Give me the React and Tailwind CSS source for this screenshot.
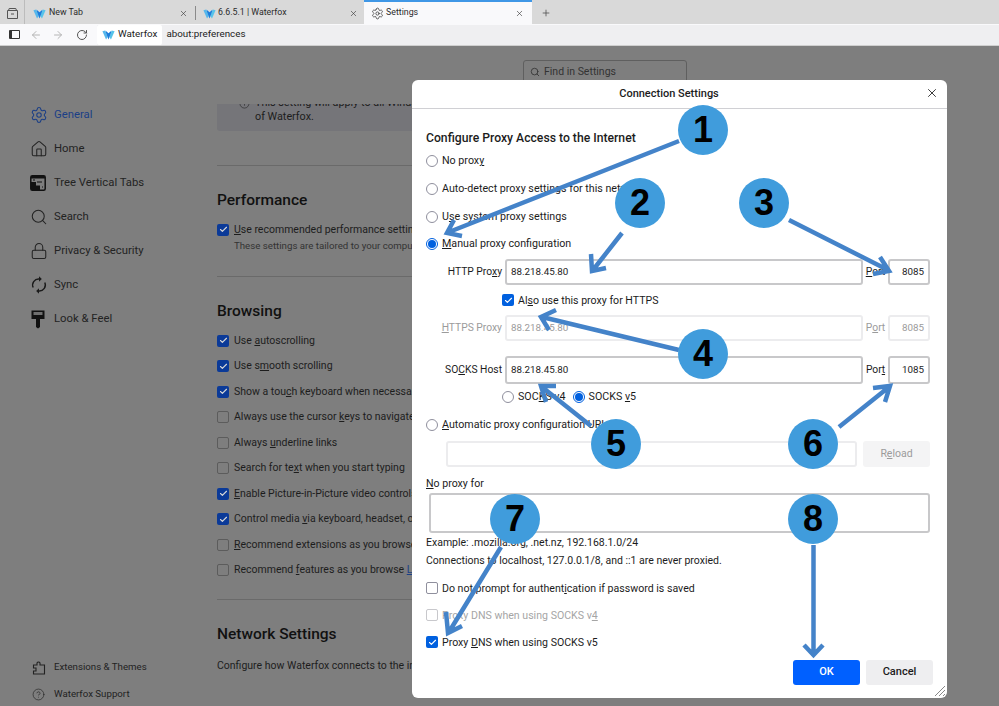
import React from "react";
import { Settings, House, Search, Lock, X, Plus, ArrowLeft, ArrowRight, RotateCw, CircleHelp, Check, Info } from "lucide-react";

const Wf = ({ s = 14 }) => (
  <svg width={s} height={s} viewBox="0 0 16 16" className="shrink-0">
    <path d="M0.5 4 L4 3 L7 11 L5 14 Z" fill="#57b8ec" />
    <path d="M15.5 4 L12 3 L9 11 L11 14 Z" fill="#57c4ea" />
    <path d="M4.5 3.5 L8 6.5 L11.5 3.5 L11 6 L8 14 L5 6 Z" fill="#1d7ddb" />
  </svg>
);

const Tab = ({ icon, label, active, w, sep }) => (
  <div className={`relative flex h-[24px] shrink-0 items-center text-[8.8px] ${w} ${active ? "border-t-2 border-[#3f97e6] bg-[#f9f9fb]" : "pt-[2px]"}`}>
    {icon}
    <span className="flex-1 text-[#2b2b2b]">{label}</span>
    <X size={9} strokeWidth={1.6} className="text-[#333]" />
    {sep && <span className="absolute right-0 top-[6px] h-[14px] w-px bg-[#8a8a8a]" />}
  </div>
);

const Nav = ({ icon, label, active }) => (
  <div className={`flex h-[34px] items-center text-[11.3px] ${active ? "text-[#1b3f86]" : "text-[#232323]"}`}>
    <span className="flex w-[24px] justify-start">{icon}</span>
    {label}
  </div>
);

const PageCheck = ({ on, children }) => (
  <div className="flex h-[25.5px] items-center whitespace-nowrap text-[10.5px] text-[#1d1d1d]">
    <span className={`mr-[5px] flex h-[12px] w-[12px] shrink-0 items-center justify-center rounded-[2px] ${on ? "bg-[#0b3a98]" : "border border-[#5c5c5c]"}`}>
      {on && <Check size={9} strokeWidth={3} className="text-[#d9d9d9]" />}
    </span>
    <span>{children}</span>
  </div>
);

const Hr = ({ cls }) => <div className={`h-px w-[400px] bg-[#6a6a6a] ${cls}`} />;

const Radio = ({ on, children }) => (
  <div className="flex items-center whitespace-nowrap text-[10.7px] text-[#1c1c1c]">
    <span className={`mr-[4px] flex h-[12px] w-[12px] shrink-0 items-center justify-center rounded-full border ${on ? "border-[#0060df]" : "border-[#8f8f9d]"} bg-white`}>
      {on && <span className="h-[8px] w-[8px] rounded-full bg-[#0060df]" />}
    </span>
    <span className="pt-px">{children}</span>
  </div>
);

const DlgCheck = ({ on, dim, children }) => (
  <div className="flex items-center whitespace-nowrap text-[10.6px] text-[#1c1c1c]">
    <span className={`mr-[4px] flex h-[12px] w-[12px] shrink-0 items-center justify-center rounded-[2px] ${on ? "bg-[#0060df]" : dim ? "border border-[#c8c8cc]" : "border border-[#8f8f9d]"}`}>
      {on && <Check size={9} strokeWidth={3} className="text-white" />}
    </span>
    <span className={`pt-px ${dim ? "text-[#a5a5a5]" : ""}`}>{children}</span>
  </div>
);

const ProxyRow = ({ label, value, port, dim, cls, portLabel }) => (
  <div className={`flex items-center text-[10.3px] ${dim ? "text-[#9b9b9b]" : "text-[#1c1c1c]"} ${cls}`}>
    <span className="w-[79px] shrink-0 whitespace-nowrap pr-[3px] text-right">{label}</span>
    <span className={`flex h-full w-[358px] items-center rounded-[3px] border-2 px-[4px] text-[9.8px] ${dim ? "border-[#ececee]" : "border-[#c8c8ca]"}`}>{value}</span>
    <span className="flex w-[25px] justify-center">{portLabel}</span>
    <span className={`flex h-full w-[42px] items-center justify-end rounded-[3px] border-2 px-[4px] text-[9.8px] ${dim ? "border-[#ececee]" : "border-[#c8c8ca]"}`}>{port}</span>
  </div>
);

const Badges = [
  [1, 703, 130], [2, 640, 203], [3, 764, 203], [4, 703, 354],
  [5, 616, 444], [6, 813, 444], [7, 515, 519], [8, 813, 519],
];

const arrows = [
  "M679 141 L449 232 M454 220 L447 233 L462 236",
  "M622 233 L593 270 M591 254 L592 271 L606 268",
  "M789 220 L888 270 M880 257 L889 271 L873 274",
  "M679 350 L542 317 M556 310 L541 317 L549 330",
  "M591 426 L542 387 M556 386 L541 386 L546 402",
  "M839 427 L889 387 M873 388 L890 386 L885 402",
  "M501 547 L449 632 M446 612 L448 633 L462 626",
  "M813.5 545 L813.5 654 M804 645 L813.5 655 L823 645",
];

export default function App() {
  const font = { fontFamily: 'Roboto,"Open Sans",sans-serif' };
  return (
    <div style={font} className="relative h-[706px] w-[999px] overflow-hidden bg-[#7e7e7e]">
      {/* tab strip */}
      <div className="flex h-[24px] items-center bg-[#d9d9d9]">
        <div className="flex h-full w-[25px] shrink-0 items-center justify-center border-r border-[#bcbcbc] pt-[2px]">
          <svg width="13" height="13" viewBox="0 0 13 13" fill="none" stroke="#555" strokeWidth="1"><path d="M2.5 3.5 L3.2 1.5 H9.8 L10.5 3.5 M1.5 3.5 H11.5 V11.5 H1.5 Z M5 7 H8" /></svg>
        </div>
        <Tab w="w-[171px] pl-[8px] pr-[8px]" icon={<Wf s={13} />} label={<span className="ml-[3px]">New Tab</span>} sep />
        <Tab w="w-[168px] pl-[7px] pr-[6px]" icon={<Wf s={13} />} label={<span className="ml-[2px]">6.6.5.1 | Waterfox</span>} />
        <Tab w="w-[168px] pl-[7px] pr-[8px]" active icon={<Settings size={13} strokeWidth={1.4} className="mr-[2px] text-[#333]" />} label="Settings" />
        <Plus size={10} className="ml-[9px] mt-[2px] text-[#555]" />
      </div>
      {/* address bar */}
      <div className="flex h-[22px] items-center border-b border-[#cfcfcf] bg-[#f9f9fb] pl-[9px]">
        <span className="h-[9px] w-[11px] rounded-[1px] border-[1.5px] border-l-[3px] border-[#333]" />
        <ArrowLeft size={12} className="ml-[10px] text-[#b5b5b5]" />
        <ArrowRight size={12} className="ml-[10px] text-[#b5b5b5]" />
        <RotateCw size={12} className="ml-[12px] text-[#555]" />
        <div className="ml-[9px] flex h-[20px] flex-1 items-center bg-[#efeff1] text-[9.8px] text-[#222]">
          <span className="flex h-full items-center gap-[3px] rounded-[2px] bg-white pl-[5px] pr-[5px]">
            <Wf s={13} />Waterfox
          </span>
          <span className="ml-[4px]">about:preferences</span>
        </div>
      </div>
      {/* page */}
      <div className="flex h-[660px]">
        <aside className="flex w-[217px] shrink-0 flex-col justify-between pl-[30px]">
          <div className="pt-[52px]">
            <Nav active label="General" icon={<Settings size={18} strokeWidth={1.4} />} />
            <Nav label="Home" icon={<House size={18} strokeWidth={1.4} />} />
            <Nav label="Tree Vertical Tabs" icon={
              <svg width="16" height="16" viewBox="0 0 16 16"><rect x="0.8" y="0.8" width="14.4" height="14.4" rx="1.5" fill="none" stroke="#111" strokeWidth="1.5" /><path d="M1 1 H15 V3.5 H1 Z M1 7 H6 V10.5 H10 V15 H1 Z" fill="#111" /><path d="M3 5 H5 M7 7 H12 M12 12 H13" stroke="#111" strokeWidth="1" /></svg>
            } />
            <Nav label="Search" icon={<Search size={18} strokeWidth={1.4} />} />
            <Nav label="Privacy & Security" icon={<Lock size={18} strokeWidth={1.4} />} />
            <Nav label="Sync" icon={
              <svg width="18" height="18" viewBox="0 0 18 18" fill="none" stroke="#1a1a1a" strokeWidth="1.4"><path d="M3.2 11.5 A6 6 0 0 1 9 3 H10.5 M14.8 6.5 A6 6 0 0 1 9 15 H7.5" /><path d="M9 0.8 L11.3 3 L9 5.2 M9 12.8 L6.7 15 L9 17.2" fill="#1a1a1a" strokeWidth="1" /></svg>
            } />
            <Nav label="Look & Feel" icon={
              <svg width="16" height="20" viewBox="0 0 16 20" fill="none"><path d="M1.5 1.5 H14.5 V10 H1.5 Z" fill="#111" /><path d="M3.5 3 H12.5 V6 H3.5 Z" fill="#6f6f6f" /><path d="M6 10 H10 V18 L8 19.5 L6 18 Z" fill="#111" /></svg>
            } />
          </div>
          <div className="text-[9.7px] text-[#222]">
            <div className="flex h-[27px] items-center pt-[4px]">
              <svg width="14" height="15" viewBox="0 0 14 15" fill="none" stroke="#222" strokeWidth="1.1" className="ml-[2px] mr-[8px]"><path d="M1.5 5 H5 V3 A1.6 1.6 0 0 1 8 3 V5 H12.5 V14 H1.5 V11 H4 V8 H1.5 Z" /></svg>
              Extensions &amp; Themes
            </div>
            <div className="flex h-[27px] items-center pt-[4px]"><CircleHelp size={13} strokeWidth={1.2} className="ml-[2px] mr-[9px]" />Waterfox Support</div>
          </div>
        </aside>
        <main className="flex min-w-0 flex-1 flex-col">
          <div className="h-[58px] shrink-0 pl-[306px] pt-[14px]">
            <div className="flex h-[24px] w-[164px] items-center gap-[4px] rounded-[3px] border border-[#5f5f5f] pl-[6px] text-[10.5px] text-[#333]">
              <Search size={10} />Find in Settings
            </div>
          </div>
          <div className="min-h-0 flex-1 overflow-hidden">
            <div className="flex h-[27px] w-[400px] flex-col justify-end overflow-hidden rounded-b-[3px] bg-[#757579] pb-[7px] pl-[38px] text-[10.8px] leading-[14px] text-[#1d1d1d]">
              <div className="relative shrink-0 whitespace-nowrap"><Info size={11} strokeWidth={1.2} className="absolute -left-[16px] top-[2px]" />This setting will apply to all Windows</div>
              <div className="shrink-0">of Waterfox.</div>
            </div>
            <Hr cls="mt-[34px]" />
            <h2 className="mt-[24px] text-[15.5px] font-medium leading-[20px] text-[#111]">Performance</h2>
            <div className="mt-[7px]"><PageCheck on><u>U</u>se recommended performance settings</PageCheck></div>
            <div className="-mt-[4px] pl-[17px] text-[9.7px] text-[#333]">These settings are tailored to your computer's hardware</div>
            <Hr cls="mt-[23px]" />
            <h2 className="mt-[24px] text-[15.5px] font-medium leading-[20px] text-[#111]">Browsing</h2>
            <div className="mt-[7px]">
              <PageCheck on>Use <u>a</u>utoscrolling</PageCheck>
              <PageCheck on>Use s<u>m</u>ooth scrolling</PageCheck>
              <PageCheck on>Show a tou<u>c</u>h keyboard when necessary</PageCheck>
              <PageCheck>Always use the cursor <u>k</u>eys to navigate within pages</PageCheck>
              <PageCheck>Always <u>u</u>nderline links</PageCheck>
              <PageCheck>Search for te<u>x</u>t when you start typing</PageCheck>
              <PageCheck on><u>E</u>nable Picture-in-Picture video controls</PageCheck>
              <PageCheck on>Control media <u>v</u>ia keyboard, headset, or virtual interface</PageCheck>
              <PageCheck><u>R</u>ecommend extensions as you browse</PageCheck>
              <PageCheck>Recommend <u>f</u>eatures as you browse <span className="text-[#1b3f86] underline">Learn more</span></PageCheck>
            </div>
            <Hr cls="mt-[16px]" />
            <h2 className="mt-[24px] text-[15.5px] font-medium leading-[20px] text-[#111]">Network Settings</h2>
            <div className="mt-[14px] whitespace-nowrap text-[10.5px] text-[#1d1d1d]">Configure how Waterfox connects to the internet.</div>
          </div>
        </main>
      </div>

      {/* dialog */}
      <div className="absolute left-[412px] top-[80px] flex h-[618px] w-[535px] flex-col rounded-[6px] bg-white">
        <div className="relative flex h-[29px] shrink-0 items-center justify-center border-b border-[#d0d0d4] pr-[21px] text-[11px] font-medium text-[#1c1c1c]">
          Connection Settings
          <X size={14} strokeWidth={1.5} className="absolute right-[8px] top-[6px] text-[#222]" />
        </div>
        <div className="flex flex-1 flex-col pl-[14px] pr-[17px]">
          <div className="mt-[21px] h-[16px] text-[12.2px] font-medium leading-[16px] text-[#1c1c1c]">Configure Proxy Access to the Internet</div>
          <div className="mt-[9px] flex h-[12px] items-center"><Radio>No prox<u>y</u></Radio></div>
          <div className="mt-[16px] flex h-[12px] items-center"><Radio>Auto-detect proxy settings for this net<u>w</u>ork</Radio></div>
          <div className="mt-[16px] flex h-[12px] items-center"><Radio>U<u>s</u>e system proxy settings</Radio></div>
          <div className="mt-[15px] flex h-[12px] items-center"><Radio on><u>M</u>anual proxy configuration</Radio></div>
          <ProxyRow cls="mt-[9px] h-[26px]" label={<>HTTP Pro<u>x</u>y</>} value="88.218.45.80" port="8085" portLabel={<><u>P</u>ort</>} />
          <div className="mt-[9px] flex h-[12px] items-center pl-[76px]"><DlgCheck on>Al<u>s</u>o use this proxy for HTTPS</DlgCheck></div>
          <ProxyRow dim cls="mt-[9px] h-[26px]" label={<><u>H</u>TTPS Proxy</>} value="88.218.45.80" port="8085" portLabel={<>P<u>o</u>rt</>} />
          <ProxyRow cls="mt-[15px] h-[28px]" label={<>SO<u>C</u>KS Host</>} value="88.218.45.80" port="1085" portLabel={<>Por<u>t</u></>} />
          <div className="mt-[7px] flex h-[12px] items-center gap-[7px] pl-[76px]"><Radio>SOC<u>K</u>S v4</Radio><Radio on>SOCKS <u>v</u>5</Radio></div>
          <div className="mt-[16px] flex h-[12px] items-center"><Radio><u>A</u>utomatic proxy configuration URL</Radio></div>
          <div className="mt-[10px] flex h-[26px] pl-[20px]">
            <span className="h-full w-[411px] rounded-[3px] border-2 border-[#ececee]" />
            <span className="ml-[6px] flex h-full w-[67px] items-center justify-center rounded-[3px] bg-[#f4f4f5] text-[10.5px] text-[#9b9b9b]">R<u>e</u>load</span>
          </div>
          <div className="mt-[10px] h-[14px] text-[10.6px] leading-[14px] text-[#1c1c1c]"><u>N</u>o proxy for</div>
          <div className="ml-[3px] mt-[2px] h-[40px] w-[501px] rounded-[3px] border-2 border-[#c8c8ca]" />
          <div className="mt-[3px] h-[14px] text-[10.5px] leading-[14px] text-[#1c1c1c]">Example: .mozilla.org, .net.nz, 192.168.1.0/24</div>
          <div className="mt-[4px] h-[14px] text-[10.5px] leading-[14px] text-[#1c1c1c]">Connections to localhost, 127.0.0.1/8, and ::1 are never proxied.</div>
          <div className="mt-[14px] flex h-[12px] items-center"><DlgCheck>Do not prompt for authent<u>i</u>cation if password is saved</DlgCheck></div>
          <div className="mt-[15px] flex h-[12px] items-center"><DlgCheck dim>Proxy DNS when using SOCKS v<u>4</u></DlgCheck></div>
          <div className="mt-[15px] flex h-[12px] items-center"><DlgCheck on>Proxy <u>D</u>NS when using SOCKS v5</DlgCheck></div>
          <div className="mt-[12px] flex justify-end gap-[6px]">
            <span className="flex h-[25px] w-[67px] items-center justify-center rounded-[3px] bg-[#0060ff] text-[11px] font-medium text-white">OK</span>
            <span className="-mr-[3px] flex h-[25px] w-[67px] items-center justify-center rounded-[3px] bg-[#eeeef0] text-[11px] font-medium text-[#1c1c1c]">Cancel</span>
          </div>
        </div>
        <svg width="11" height="11" viewBox="0 0 11 11" className="absolute bottom-[2px] right-[2px]" stroke="#888" strokeWidth="1"><path d="M1 11 L11 1 M5 11 L11 5 M9 11 L11 9" /></svg>
      </div>

      {/* annotations */}
      <svg width="999" height="706" className="pointer-events-none absolute left-0 top-0" fill="none" stroke="#4483c9" strokeWidth="4.5">
        {arrows.map((d) => <path key={d} d={d} />)}
      </svg>
      {Badges.map(([n, x, y]) => (
        <div key={n} style={{ left: x - 25, top: y - 25, fontFamily: '"Liberation Sans",sans-serif' }}
          className="absolute flex h-[50px] w-[50px] items-center justify-center rounded-full bg-[#409cdc] text-[36px] font-bold text-black">
          {n}
        </div>
      ))}
    </div>
  );
}
